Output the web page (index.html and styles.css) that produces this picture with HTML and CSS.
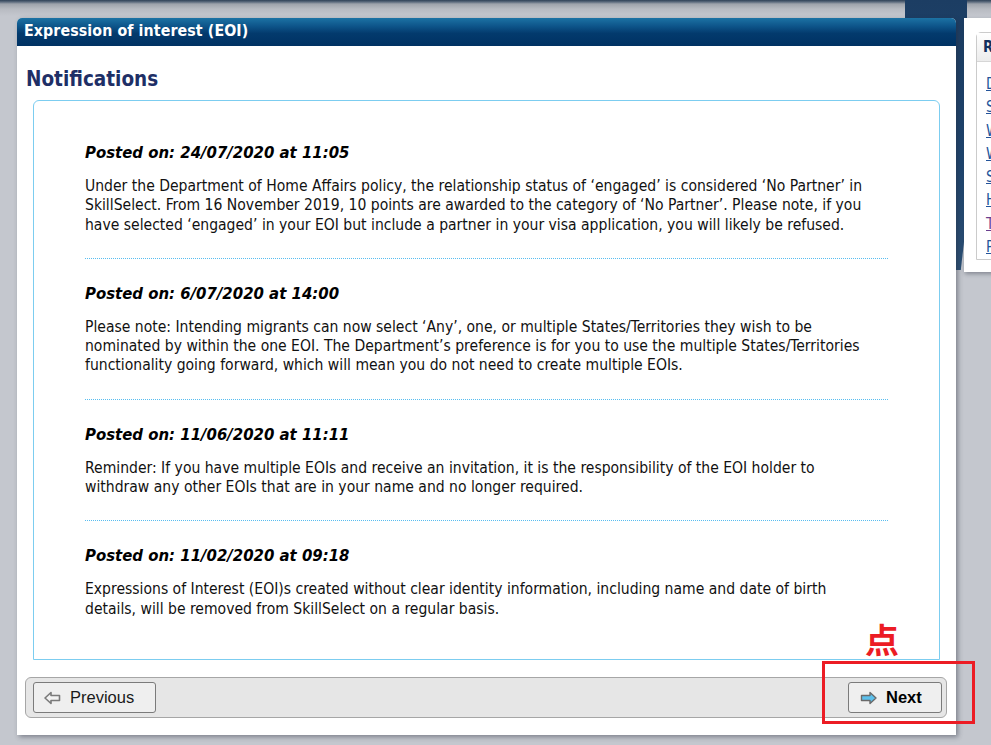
FILE: index.html
```html
<!DOCTYPE html>
<html lang="en">
<head>
<meta charset="utf-8">
<title>Expression of interest (EOI)</title>
<link rel="stylesheet" href="styles.css">
</head>
<body>
<div class="decor"></div>
<div class="page">
  <section class="panel">
    <header class="panel-head">Expression of interest (EOI)</header>
    <h1 class="page-title">Notifications</h1>
    <div class="notices">
      <article class="notice">
        <h3 class="notice-date">Posted on: 24/07/2020 at 11:05</h3>
        <p class="notice-text">Under the Department of Home Affairs policy, the relationship status of ‘engaged’ is considered ‘No Partner’ in SkillSelect. From 16 November 2019, 10 points are awarded to the category of ‘No Partner’. Please note, if you have selected ‘engaged’ in your EOI but include a partner in your visa application, you will likely be refused.</p>
      </article>
      <article class="notice">
        <h3 class="notice-date">Posted on: 6/07/2020 at 14:00</h3>
        <p class="notice-text">Please note: Intending migrants can now select ‘Any’, one, or multiple States/Territories they wish to be nominated by within the one EOI. The Department’s preference is for you to use the multiple States/Territories functionality going forward, which will mean you do not need to create multiple EOIs.</p>
      </article>
      <article class="notice">
        <h3 class="notice-date">Posted on: 11/06/2020 at 11:11</h3>
        <p class="notice-text">Reminder: If you have multiple EOIs and receive an invitation, it is the responsibility of the EOI holder to withdraw any other EOIs that are in your name and no longer required.</p>
      </article>
      <article class="notice">
        <h3 class="notice-date">Posted on: 11/02/2020 at 09:18</h3>
        <p class="notice-text">Expressions of Interest (EOI)s created without clear identity information, including name and date of birth details, will be removed from SkillSelect on a regular basis.</p>
      </article>
    </div>
    <div class="nav-bar">
      <button class="btn btn-prev" type="button">
        <svg class="btn-icon" width="17" height="14" viewBox="0 0 17 14"><polygon points="1,7 7,1.5 7,4.5 15.5,4.5 15.5,9.5 7,9.5 7,12.5" fill="#f2f2f2" stroke="#7a7a7a" stroke-width="1.6" stroke-linejoin="round"/></svg>
        <span>Previous</span>
      </button>
      <button class="btn btn-next" type="button">
        <svg class="btn-icon" width="17" height="14" viewBox="0 0 17 14"><polygon points="16,7 10,1.5 10,4.5 1.5,4.5 1.5,9.5 10,9.5 10,12.5" fill="#5cc0ec" stroke="#6a6a6a" stroke-width="1.4" stroke-linejoin="round"/></svg>
        <span>Next</span>
      </button>
    </div>
  </section>
  <aside class="side">
    <div class="side-box">
      <div class="side-head">Related links</div>
      <ul class="side-links">
        <li><a href="#">Department of Home Affairs</a></li>
        <li><a href="#">SkillSelect information</a></li>
        <li><a href="#">What is SkillSelect</a></li>
        <li><a href="#">Working in Australia</a></li>
        <li><a href="#">State and territory nomination</a></li>
        <li><a href="#">Help and support</a></li>
        <li><a href="#" class="visited">Terms and conditions</a></li>
        <li><a href="#">Privacy</a></li>
      </ul>
    </div>
  </aside>
</div>
<div class="hint-mark">点</div>
<div class="hint-box"></div>
</body>
</html>
```

FILE: styles.css
```css
html {
  overflow: hidden;
}
body {
  margin: 0;
  width: 991px;
  height: 745px;
  overflow: hidden;
  position: relative;
  background: linear-gradient(#2f4157 0, #5d6c7e 2px, #9ea3ab 4px, #b8bbc2 9px, #c4c7ce 16px, #c4c7ce 100%);
  font-family: "DejaVu Sans Condensed", "DejaVu Sans", sans-serif;
  color: #111;
}
.decor {
  position: absolute;
  left: 905px;
  top: 0;
  width: 62px;
  height: 270px;
  background: linear-gradient(#1c3d63, #1f4670 60%, #2d5176);
  clip-path: polygon(0 0, 100% 0, 100% 80%, 90% 100%, 80% 100%, 0 7%);
}
.page {
  position: relative;
  display: flex;
  align-items: flex-start;
  gap: 8px;
  padding: 18px 0 0 17px;
}
.panel {
  width: 939px;
  height: 717px;
  flex: none;
  background: #fff;
  box-shadow: 2px 2px 5px rgba(40, 45, 60, 0.45);
  border-radius: 5px 5px 0 0;
  display: flex;
  flex-direction: column;
}
.panel-head {
  height: 28px;
  line-height: 26px;
  padding: 0 7px;
  border-radius: 5px 5px 0 0;
  background: linear-gradient(#1c72a4 0, #0d5489 30%, #033a6d 55%, #003263 100%);
  color: #fff;
  font-weight: bold;
  font-size: 15.8px;
  letter-spacing: 0.1px;
}
.page-title {
  margin: 0;
  height: 54px;
  padding: 20px 0 0 9px;
  box-sizing: border-box;
  font-size: 20.5px;
  line-height: 26px;
  font-weight: bold;
  color: #1e2f66;
}
.notices {
  flex: 1;
  margin: 0 16px;
  padding: 17px 51px 0;
  border: 1px solid #7ccdf0;
  border-radius: 6px 6px 0 0;
}
.notice {
  padding: 25px 0 23px;
  border-bottom: 1px dotted #58bdf0;
}
.notice:last-child {
  border-bottom: none;
}
.notice-date {
  margin: 0 0 15px;
  font-size: 16.6px;
  line-height: 19px;
  font-weight: bold;
  font-style: italic;
  color: #000;
}
.notice-text {
  margin: 0 10px 0 0;
  font-size: 15.55px;
  line-height: 19.3px;
  color: #111;
}
.nav-bar {
  margin: 17px 9px 17px 8px;
  height: 41px;
  box-sizing: border-box;
  background: #e6e6e6;
  border: 1px solid #a6a6a6;
  border-radius: 6px;
  display: flex;
  justify-content: space-between;
  align-items: center;
  padding: 0 4px 0 7px;
}
.btn {
  height: 31px;
  display: flex;
  align-items: center;
  gap: 9px;
  background: #efefef;
  border: 1px solid #7b7b7b;
  border-radius: 3px;
  font-family: "Liberation Sans", Arial, sans-serif;
  font-size: 16.5px;
  color: #1a1a1a;
  cursor: pointer;
}
.btn-prev {
  width: 123px;
  padding: 0 0 0 10px;
}
.btn-next {
  width: 94px;
  padding: 0 0 0 11px;
  font-weight: bold;
  color: #000;
}
.btn-icon {
  flex: none;
}
.side {
  width: 260px;
  flex: none;
  height: 254px;
  box-sizing: border-box;
  background: #fff;
  padding: 14px 0 12px 12px;
  box-shadow: 1px 2px 4px rgba(40, 45, 60, 0.4);
}
.side-box {
  height: 228px;
  box-sizing: border-box;
  border: 1px solid #cbcbcb;
  border-radius: 5px 5px 0 0;
}
.side-head {
  height: 28px;
  line-height: 28px;
  padding: 0 6px;
  background: linear-gradient(#ffffff, #ececec);
  border-bottom: 1px solid #d6d6d6;
  font-weight: bold;
  font-size: 15px;
  color: #14305e;
  white-space: nowrap;
}
.side-links {
  list-style: none;
  margin: 0;
  padding: 11px 0 0 9px;
}
.side-links li {
  line-height: 23.3px;
  font-size: 15px;
  white-space: nowrap;
}
.side-links a {
  color: #24549a;
  text-decoration: underline;
}
.side-links a.visited {
  color: #6b3f8f;
}
.hint-mark {
  position: absolute;
  left: 865px;
  top: 619px;
  font-family: "Noto Sans CJK SC", sans-serif;
  font-weight: bold;
  font-size: 34px;
  line-height: 40px;
  color: #ec1c24;
  text-shadow: -1px -1px 0 #fff, 1px -1px 0 #fff, -1px 1px 0 #fff, 1px 1px 0 #fff, 0 0 3px #fff;
}
.hint-box {
  position: absolute;
  left: 822px;
  top: 661px;
  width: 153px;
  height: 63px;
  box-sizing: border-box;
  border: 3px solid #ec1c24;
}
```
